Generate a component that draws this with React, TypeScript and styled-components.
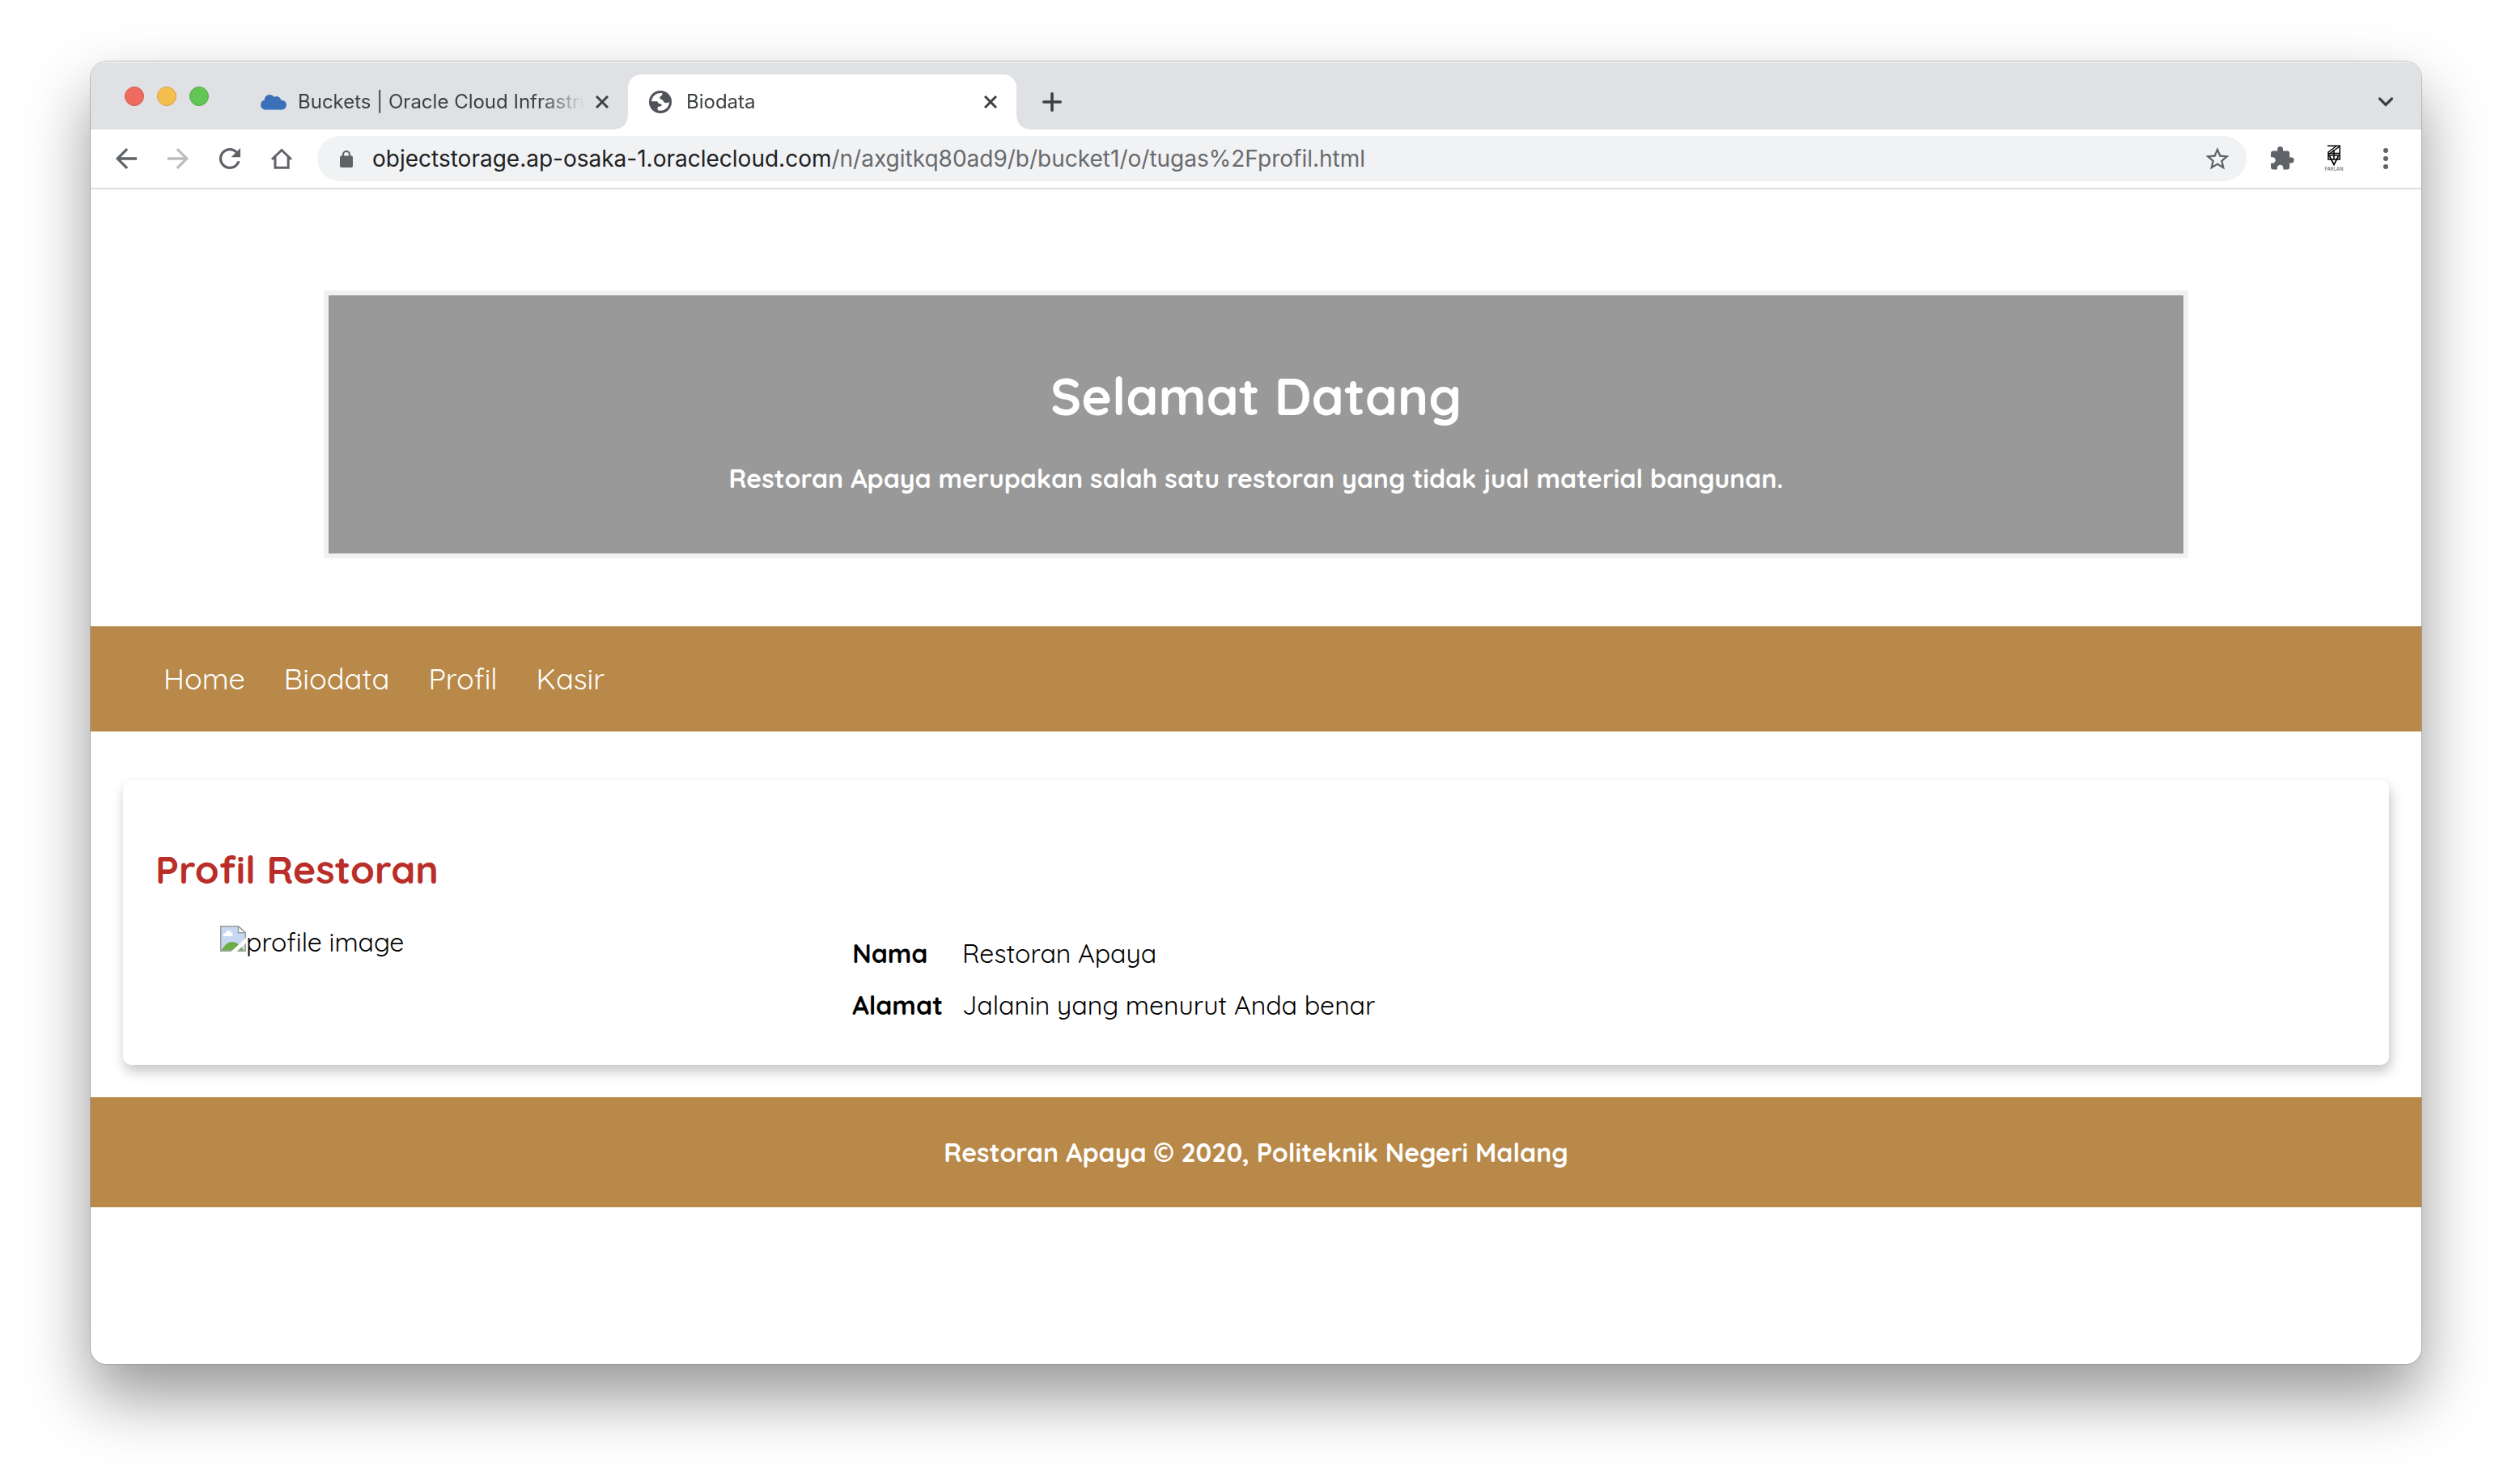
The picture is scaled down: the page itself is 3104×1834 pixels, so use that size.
import React from "react";
import styled, { createGlobalStyle } from "styled-components";

const GlobalStyle = createGlobalStyle`
  *, *::before, *::after { box-sizing: border-box; }
  body { margin: 0; background: #fff; }
  h1, h2, p, ul, figure { margin: 0; padding: 0; }
  button { border: 0; padding: 0; background: none; font: inherit; color: inherit; cursor: pointer; }
`;

const uiFont = `"SF Pro Text", Inter, "Liberation Sans", sans-serif`;
const pageFont = `Quicksand, Inter, "Liberation Sans", sans-serif`;

const Desktop = styled.div`
  display: flex;
  min-height: 100vh;
  padding: 76px 112px 148px;
`;

const Window = styled.div`
  flex: 1;
  min-width: 0;
  overflow: hidden;
  border-radius: 20px;
  background: #fff;
  box-shadow: 0 0 0 1px rgba(0, 0, 0, 0.2), 0 40px 80px rgba(0, 0, 0, 0.41);
`;

/* ---------- Browser chrome ---------- */

const TabStrip = styled.div`
  display: flex;
  align-items: flex-start;
  height: 84px;
  padding: 0 28px 0 42px;
  background: #dfe1e5;
  box-shadow: inset 0 2px 0 #eceef0;
  font-family: ${uiFont};
`;

const Lights = styled.div`
  display: flex;
  gap: 16px;
  padding-top: 31px;
  margin-right: 38px;
`;

const Light = styled.button<{ $fill: string; $ring: string }>`
  width: 24px;
  height: 24px;
  border: 1px solid ${(p) => p.$ring};
  border-radius: 50%;
  background: ${(p) => p.$fill};
`;

const Tab = styled.div<{ $active?: boolean }>`
  position: relative;
  display: flex;
  align-items: center;
  flex: 0 1 480px;
  min-width: 0;
  height: 68px;
  margin-top: 16px;
  padding: 0 16px 0 26px;
  border-radius: 16px 16px 0 0;
  color: #3c4043;
  background: ${(p) => (p.$active ? "#fff" : "transparent")};

  &::before,
  &::after {
    content: "";
    display: ${(p) => (p.$active ? "block" : "none")};
    position: absolute;
    bottom: 0;
    width: 16px;
    height: 16px;
  }
  &::before {
    right: 100%;
    background: radial-gradient(circle at 0 0, transparent 15px, #fff 16px);
  }
  &::after {
    left: 100%;
    background: radial-gradient(circle at 100% 0, transparent 15px, #fff 16px);
  }
`;

const TabTitle = styled.span`
  flex: 1;
  min-width: 0;
  margin-left: 14px;
  white-space: nowrap;
  font-size: 24px;
  line-height: 32px;
  mask-image: linear-gradient(to right, #000 calc(100% - 60px), transparent calc(100% - 6px));
`;

const IconButton = styled.button<{ $dim?: boolean }>`
  display: flex;
  flex: none;
  align-items: center;
  justify-content: center;
  width: 32px;
  height: 32px;
  color: ${(p) => (p.$dim ? "#babcbe" : "#5f6368")};
`;

const CloseButton = styled(IconButton)`
  color: #3c4043;
`;

const StripButton = styled(IconButton)<{ $end?: boolean }>`
  height: 68px;
  margin-top: 16px;
  margin-left: ${(p) => (p.$end ? "auto" : "28px")};
  color: #3c4043;
`;

const Toolbar = styled.div`
  display: flex;
  align-items: center;
  gap: 28px;
  padding: 8px 28px;
  border-bottom: 2px solid #dcdcdc;
  background: #fff;
  font-family: ${uiFont};
`;

const ButtonGroup = styled.div`
  display: flex;
  align-items: center;
  gap: 32px;
`;

const Omnibox = styled.div`
  display: flex;
  align-items: center;
  flex: 1;
  min-width: 0;
  height: 56px;
  padding: 0 20px 0 24px;
  border-radius: 28px;
  background: #f1f2f4;
  color: #5f6368;
`;

const Address = styled.div`
  flex: 1;
  min-width: 0;
  margin-left: 20px;
  overflow: hidden;
  white-space: nowrap;
  font-size: 28px;
  line-height: 40px;
  color: #686a6d;
  outline: none;
`;

const Host = styled.span`
  color: #202124;
`;

const Profile = styled.button`
  display: flex;
  flex-direction: column;
  align-items: center;
  width: 32px;
  font-size: 6px;
  line-height: 8px;
  color: #555;
`;

/* ---------- Web page ---------- */

const Page = styled.div`
  font-family: ${pageFont};
  font-size: 32px;
  line-height: 40px;
  color: #000;
`;

const Hero = styled.header`
  padding: 125px 0 84px;
`;

const Welcome = styled.div`
  width: 80%;
  margin: 0 auto;
  padding: 84px 40px 73px;
  border: 6px solid #f1f1f1;
  background: #999;
  color: #fff;
  text-align: center;
  font-weight: 700;
`;

const WelcomeTitle = styled.h1`
  margin-bottom: 42px;
  font-size: 64px;
  line-height: 80px;
`;

const NavBar = styled.nav`
  padding: 43px 90px;
  background: #b88949;
`;

const NavList = styled.ul`
  display: flex;
  gap: 48px;
  list-style: none;
  font-size: 36px;
  line-height: 44px;
`;

const NavLink = styled.a`
  color: #fff;
  text-decoration: none;
`;

const Main = styled.main`
  padding: 60px 40px 40px;
`;

const Card = styled.section`
  padding: 80px 40px 40px;
  border-radius: 10px;
  background: #fff;
  box-shadow: 2px 8px 16px rgba(0, 0, 0, 0.23);
`;

const CardTitle = styled.h2`
  margin-bottom: 40px;
  font-size: 48px;
  line-height: 60px;
  font-weight: 700;
  color: #b92e28;
`;

const CardBody = styled.div`
  display: grid;
  grid-template-columns: 31% 1fr;
  column-gap: 4px;
  align-items: start;
`;

const Photo = styled.figure`
  display: flex;
  padding: 0 80px;
`;

const Details = styled.table`
  justify-self: start;
  border-collapse: separate;
  border-spacing: 4px;

  th,
  td {
    padding: 10px;
    text-align: left;
  }
`;

const Footer = styled.footer`
  padding: 48px 40px;
  background: #b88949;
  color: #fff;
  text-align: center;
  font-weight: 700;
`;

/* ---------- Icons ---------- */

type GlyphProps = { d: string; viewBox: string };

const Glyph = ({ d, viewBox }: GlyphProps) => (
  <svg width="32" height="32" viewBox={viewBox} fill="currentColor" aria-hidden="true">
    <path d={d} />
  </svg>
);

const centred = "2.2 2.2 19.6 19.6";
const backPath = "M20 11H7.83l5.59-5.59L12 4l-8 8 8 8 1.41-1.41L7.83 13H20v-2z";
const forwardPath = "M12 4l-1.41 1.41L16.17 11H4v2h12.17l-5.58 5.59L12 20l8-8z";
const reloadPath =
  "M17.65 6.35A7.958 7.958 0 0 0 12 4c-4.42 0-7.99 3.58-7.99 8s3.57 8 7.99 8c3.73 0 6.84-2.55 7.73-6h-2.08A5.99 5.99 0 0 1 12 18c-3.31 0-6-2.69-6-6s2.69-6 6-6c1.66 0 3.14.69 4.22 1.78L13 11h7V4l-2.35 2.35z";
const starPath =
  "M22 9.24l-7.19-.62L12 2 9.19 8.63 2 9.24l5.46 4.73L5.82 21 12 17.27 18.18 21l-1.63-7.03L22 9.24zM12 15.4l-3.76 2.27 1-4.28-3.32-2.88 4.38-.38L12 6.1l1.71 4.04 4.38.38-3.32 2.88 1 4.28L12 15.4z";
const puzzlePath =
  "M20.5 11H19V7c0-1.1-.9-2-2-2h-4V3.5a2.5 2.5 0 0 0-5 0V5H4c-1.1 0-1.99.9-1.99 2v3.8H3.5c1.49 0 2.7 1.21 2.7 2.7s-1.21 2.7-2.7 2.7H2V20c0 1.1.9 2 2 2h3.8v-1.5c0-1.49 1.21-2.7 2.7-2.7 1.49 0 2.7 1.21 2.7 2.7V22H17c1.1 0 2-.9 2-2v-4h1.5a2.5 2.5 0 0 0 0-5z";

const HomeIcon = () => (
  <svg width="32" height="32" viewBox="0 0 32 32" fill="none" stroke="currentColor" strokeWidth="3" aria-hidden="true">
    <path d="M4 17L16 5.5L28 17" />
    <path d="M8 14V27.3H24.2V14" />
  </svg>
);

const LockIcon = () => (
  <svg width="24" height="32" viewBox="0 0 24 32" fill="currentColor" aria-hidden="true">
    <rect x="4" y="12.5" width="16" height="14.5" rx="2" />
    <path d="M8 14V11a4 4 0 0 1 8 0v3" fill="none" stroke="currentColor" strokeWidth="2.2" />
  </svg>
);

const CloseIcon = () => (
  <svg width="16" height="16" viewBox="0 0 16 16" stroke="currentColor" strokeWidth="3" aria-hidden="true">
    <path d="M1 1L15 15M15 1L1 15" />
  </svg>
);

const PlusIcon = () => (
  <svg width="24" height="24" viewBox="0 0 24 24" stroke="currentColor" strokeWidth="3.6" strokeLinecap="round" aria-hidden="true">
    <path d="M12 1.8V22.2M1.8 12H22.2" />
  </svg>
);

const ChevronIcon = () => (
  <svg width="20" height="14" viewBox="0 0 20 14" fill="none" stroke="currentColor" strokeWidth="3.2" strokeLinecap="round" aria-hidden="true">
    <path d="M2.5 3L10 10.5L17.5 3" />
  </svg>
);

const DotsIcon = () => (
  <svg width="32" height="32" viewBox="0 0 32 32" fill="currentColor" aria-hidden="true">
    <circle cx="16" cy="6" r="3" />
    <circle cx="16" cy="16" r="3" />
    <circle cx="16" cy="26" r="3" />
  </svg>
);

const CloudIcon = () => (
  <svg width="32" height="32" viewBox="0 0 32 32" fill="#3a70b8" aria-hidden="true">
    <circle cx="6.2" cy="19.7" r="6.2" />
    <circle cx="11.2" cy="13.4" r="6.4" />
    <circle cx="19.6" cy="14.8" r="5.8" />
    <circle cx="25.9" cy="19.8" r="6.1" />
    <path d="M6 14H26V26H6z" />
    <path d="M5 25.6H27" stroke="#7ba6dc" strokeWidth="1" />
  </svg>
);

const GlobeIcon = () => (
  <svg width="32" height="32" viewBox="0 -6 96 96" aria-hidden="true">
    <circle cx="42" cy="42" r="42" fill="#505259" />
    <path
      fill="#fff"
      d="M49 9C26 6 10 22 9 40H30C33 40 32 46 35 47C42 48 46 49 47 54C47 59 40 58 32 60V73C54 79 74 64 75 43C70 46 62 46 57 44C53 40 52 34 45 32C38 30 38 24 44 20C49 18 50 14 49 9Z"
    />
  </svg>
);

const FarlanMark = () => (
  <svg width="16" height="26" viewBox="0 0 16 26" fill="none" stroke="#000" strokeWidth="1.5" aria-hidden="true">
    <path d="M0 1.2H15.2V18H1V9L11 1.5" />
    <path d="M15 2L1 12M1 10.5H15M1 13H15M8 6V18" />
    <path d="M2.5 14L8 24.5L13.5 14" strokeWidth="1.7" />
  </svg>
);

const BrokenImage = () => (
  <svg width="32" height="32" viewBox="0 0 32 32" aria-hidden="true">
    <path d="M0.75 0.75H22.5L31.25 9V31.25H0.75z" fill="#c8d7f2" stroke="#9a9a9a" strokeWidth="1.5" />
    <path d="M1.5 30.5C6 23 10 20 15 20C20 20 25 24 29 30.5z" fill="#6dac47" />
    <path d="M4 13C3 10 6 9 7 9C8 5 13 5 14 9C17 10 16 13 14 13z" fill="#fff" />
    <path d="M22.5 0.75V8.8H31.25z" fill="#fff" stroke="#9a9a9a" strokeWidth="1.5" />
    <path d="M13.5 32L32 15V21.5L20.5 32z" fill="#fff" />
  </svg>
);

/* ---------- Content ---------- */

const lights = [
  { name: "Close window", fill: "#ed6b5f", ring: "#d5574c" },
  { name: "Minimise window", fill: "#f5bf4f", ring: "#d8a13c" },
  { name: "Zoom window", fill: "#62c654", ring: "#4fa73f" },
];

const links = ["Home", "Biodata", "Profil", "Kasir"];

const details = [
  { label: "Nama", value: "Restoran Apaya" },
  { label: "Alamat", value: "Jalanin yang menurut Anda benar" },
];

const CloseTab = () => (
  <CloseButton aria-label="Close tab">
    <CloseIcon />
  </CloseButton>
);

export default function App() {
  return (
    <>
      <GlobalStyle />
      <Desktop>
        <Window>
          <TabStrip>
            <Lights>
              {lights.map((l) => (
                <Light key={l.name} aria-label={l.name} $fill={l.fill} $ring={l.ring} />
              ))}
            </Lights>
            <Tab>
              <CloudIcon />
              <TabTitle>Buckets | Oracle Cloud Infrastru</TabTitle>
              <CloseTab />
            </Tab>
            <Tab $active>
              <GlobeIcon />
              <TabTitle>Biodata</TabTitle>
              <CloseTab />
            </Tab>
            <StripButton aria-label="New tab">
              <PlusIcon />
            </StripButton>
            <StripButton aria-label="Search tabs" $end>
              <ChevronIcon />
            </StripButton>
          </TabStrip>

          <Toolbar>
            <ButtonGroup>
              <IconButton aria-label="Back">
                <Glyph d={backPath} viewBox={centred} />
              </IconButton>
              <IconButton aria-label="Forward" $dim>
                <Glyph d={forwardPath} viewBox={centred} />
              </IconButton>
              <IconButton aria-label="Reload">
                <Glyph d={reloadPath} viewBox={centred} />
              </IconButton>
              <IconButton aria-label="Home page">
                <HomeIcon />
              </IconButton>
            </ButtonGroup>
            <Omnibox>
              <LockIcon />
              <Address role="textbox" aria-label="Address" contentEditable suppressContentEditableWarning spellCheck={false}>
                <Host>objectstorage.ap-osaka-1.oraclecloud.com</Host>
                /n/axgitkq80ad9/b/bucket1/o/tugas%2Fprofil.html
              </Address>
              <IconButton aria-label="Bookmark this page">
                <Glyph d={starPath} viewBox="1 0.7 22 22" />
              </IconButton>
            </Omnibox>
            <ButtonGroup>
              <IconButton aria-label="Extensions">
                <Glyph d={puzzlePath} viewBox="0.5 0.3 23.5 23.5" />
              </IconButton>
              <Profile>
                <FarlanMark />
                FARLAN
              </Profile>
              <IconButton aria-label="Menu">
                <DotsIcon />
              </IconButton>
            </ButtonGroup>
          </Toolbar>

          <Page>
            <Hero>
              <Welcome>
                <WelcomeTitle>Selamat Datang</WelcomeTitle>
                <p>Restoran Apaya merupakan salah satu restoran yang tidak jual material bangunan.</p>
              </Welcome>
            </Hero>
            <NavBar>
              <NavList>
                {links.map((name) => (
                  <li key={name}>
                    <NavLink href={`#${name.toLowerCase()}`}>{name}</NavLink>
                  </li>
                ))}
              </NavList>
            </NavBar>
            <Main>
              <Card>
                <CardTitle>Profil Restoran</CardTitle>
                <CardBody>
                  <Photo>
                    <BrokenImage />
                    <span>profile image</span>
                  </Photo>
                  <Details>
                    <tbody>
                      {details.map((d) => (
                        <tr key={d.label}>
                          <th scope="row">{d.label}</th>
                          <td>{d.value}</td>
                        </tr>
                      ))}
                    </tbody>
                  </Details>
                </CardBody>
              </Card>
            </Main>
            <Footer>
              <p>Restoran Apaya © 2020, Politeknik Negeri Malang</p>
            </Footer>
          </Page>
        </Window>
      </Desktop>
    </>
  );
}
